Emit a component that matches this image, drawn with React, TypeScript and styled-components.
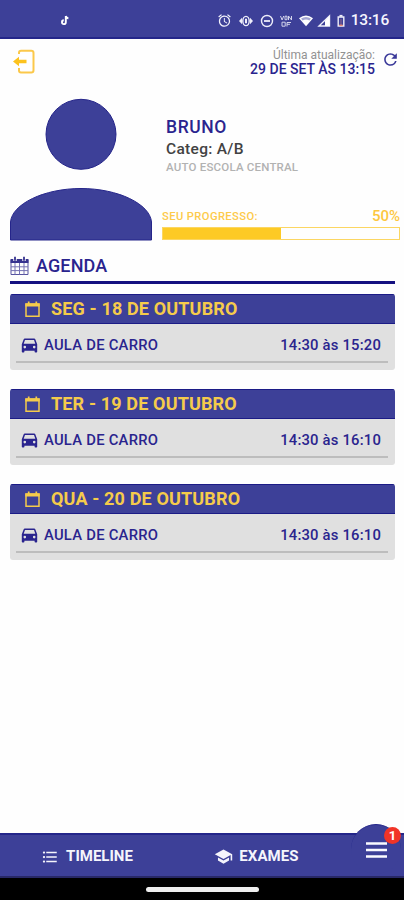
import React from "react";
import styled, { createGlobalStyle } from "styled-components";
import {
  MdAlarm,
  MdFormatListBulleted,
  MdRefresh,
  MdSchool,
} from "react-icons/md";

const colors = {
  primary: "#3d4098",
  dark: "#141080",
  text: "#2a248e",
  yellow: "#fdca25",
  gray: "#e0e0e0",
};

const GlobalStyle = createGlobalStyle`
  * { box-sizing: border-box; }
  body { margin: 0; background: #fff; font-family: Roboto, sans-serif; }
  svg { display: block; flex: none; }
`;

const Screen = styled.div`
  width: 404px;
  height: 900px;
  display: flex;
  flex-direction: column;
  overflow: hidden;
  background: #fefefe;
`;

const Label = styled.span<{ $size: number; $weight?: number; $color?: string; $spacing?: number }>`
  font-size: ${(p) => p.$size}px;
  font-weight: ${(p) => p.$weight ?? 500};
  color: ${(p) => p.$color ?? colors.text};
  letter-spacing: ${(p) => p.$spacing ?? 0}px;
  line-height: 1;
  white-space: nowrap;
`;

const StatusBar = styled.div`
  height: 39px;
  flex: none;
  display: flex;
  align-items: center;
  justify-content: space-between;
  padding: 4px 15px 0 61px;
  background: ${colors.primary};
  border-bottom: 2px solid #24268a;
  color: #f3f3fc;
`;

const StatusIcons = styled.div`
  display: flex;
  align-items: center;
`;

const StatusGlyphs = styled.div`
  display: flex;
  margin-right: 3px;
`;

const TopBar = styled.header`
  height: 50px;
  flex: none;
  display: flex;
  justify-content: space-between;
  padding: 10px 4px 0 13px;
`;

const UpdateInfo = styled.div`
  display: flex;
  gap: 6px;
`;

const UpdateText = styled.div`
  display: flex;
  flex-direction: column;
  align-items: flex-end;
  gap: 1px;
`;

const RefreshSlot = styled.div`
  padding-top: 1px;
`;

const Profile = styled.section`
  height: 153px;
  flex: none;
  display: flex;
  gap: 10px;
  padding: 0 4px 0 10px;
`;

const Avatar = styled.div`
  width: 142px;
  padding-top: 9px;
`;

const ProfileInfo = styled.div`
  width: 238px;
  display: flex;
  flex-direction: column;
`;

const Identity = styled.div`
  display: flex;
  flex-direction: column;
  align-items: flex-start;
  padding: 30px 0 0 4px;
  height: 120px;
  gap: 5px;
`;

const ProgressHead = styled.div`
  display: flex;
  justify-content: space-between;
  align-items: center;
  height: 15px;
  margin-bottom: 3px;
`;

const ProgressTrack = styled.div`
  height: 13px;
  border: 1px solid #fbd662;
`;

const ProgressFill = styled.div<{ $percent: number }>`
  width: ${(p) => p.$percent}%;
  height: 100%;
  background: ${colors.yellow};
`;

const Agenda = styled.main`
  flex: 1;
  padding: 12px 9px 0 10px;
`;

const SectionTitle = styled.h2`
  margin: 0 0 10px;
  height: 30px;
  display: flex;
  align-items: center;
  gap: 7px;
  padding-bottom: 4px;
  border-bottom: 3px solid ${colors.dark};
`;

const Cards = styled.div`
  display: flex;
  flex-direction: column;
  gap: 19px;
`;

const Card = styled.article`
  height: 76px;
  border-radius: 3px;
  overflow: hidden;
  background: ${colors.gray};
`;

const CardHeader = styled.div`
  height: 30px;
  display: flex;
  align-items: center;
  gap: 11px;
  padding-left: 15px;
  background: ${colors.primary};
  border-top: 1px solid #1b1b86;
  border-bottom: 1px solid #1b1b86;
`;

const Lesson = styled.div`
  height: 39px;
  margin: 0 7px 0 6px;
  padding: 5px 7px 0 5px;
  display: flex;
  align-items: center;
  border-bottom: 2px solid #bdbdbd;
`;

const LessonName = styled.div`
  flex: 1;
  display: flex;
  align-items: center;
  gap: 6px;
  color: ${colors.text};
`;

const NavBar = styled.nav`
  position: relative;
  height: 45px;
  flex: none;
  display: flex;
  background: ${colors.primary};
  border-top: 2px solid #24268a;
  border-bottom: 2px solid #282866;
  color: #f5f5fc;
`;

const NavItem = styled.div<{ $width: number; $gap: number }>`
  width: ${(p) => p.$width}px;
  display: flex;
  align-items: center;
  justify-content: center;
  gap: ${(p) => p.$gap}px;
  padding-top: 2px;
`;

const MenuButton = styled.div`
  position: absolute;
  right: 3px;
  top: -11px;
  width: 50px;
  height: 50px;
  border-radius: 50%;
  background: ${colors.primary};
  border-top: 1px solid #24268a;
  display: flex;
  justify-content: center;
  padding-top: 17px;
`;

const Badge = styled.div`
  position: absolute;
  top: 2px;
  right: 0;
  width: 17px;
  height: 17px;
  border-radius: 50%;
  background: #f13427;
  display: flex;
  align-items: center;
  justify-content: center;
`;

const SystemBar = styled.div`
  height: 22px;
  flex: none;
  background: #000;
  display: flex;
  justify-content: center;
  padding-top: 9px;
`;

const HomePill = styled.div`
  width: 113px;
  height: 5px;
  border-radius: 3px;
  background: #efefef;
`;

const NoteIcon = () => (
  <svg width="9" height="11" viewBox="0 0 9 11" fill="none">
    <path d="M4.8 1v6.2a1.9 1.9 0 1 1-2-1.9M4.8 1c.2 1.5 1.2 2.2 2.6 2.3" stroke="#fff" strokeWidth="1.9" />
  </svg>
);

const StatusDrawings = () => (
  <svg width="116" height="16" viewBox="0 0 116 16" fill="none" stroke="#eeeefa" strokeWidth="1.4">
    <ellipse cx="14" cy="8" rx="3.2" ry="4.6" />
    <path d="M14 5.7v4.6" strokeWidth="2" />
    <path d="M10 4.8 7 8 10 11.2zM18 4.8 21 8 18 11.2z" fill="#eeeefa" stroke="none" />
    <circle cx="35" cy="8" r="5.5" />
    <path d="M32 8h6" strokeWidth="1.8" />
    <g strokeWidth="1" opacity=".85">
      <path d="M48.5 3l1.6 4 1.6-4M53 3.2h2v3.5h-2zM56.5 7V3l3 4V3" />
      <path d="M50 9.2h3.2v4H50zM55 13.5v-4h4M55 11.3h3" />
    </g>
    <path d="M67 5.2Q74-.2 81 5.2L74 13.2z" fill="#fff" stroke="none" />
    <path d="M69 5.6q5-3 10 0l-1.6 1.8q-3.4-2-6.8 0z" fill="#5a5cae" stroke="none" opacity=".55" />
    <path d="M87 13 97.5 2.8V13z" />
    <path d="M93 7.5 97.5 3v10H93z" fill="#fff" stroke="none" />
    <path d="M106.2 4h5.6v9h-5.6z" />
    <path d="M107.5 2.8h3" strokeWidth="1.8" />
    <path d="M109 6v6" stroke="#ee8d78" strokeWidth=".8" opacity=".6" />
    <path d="M107.3 12.3h3.4" stroke="#ee8d78" />
  </svg>
);

const ExitIcon = () => (
  <svg width="23" height="26" viewBox="0 0 23 26" fill="none">
    <path d="M6 5V3.7Q6 1.7 8 1.7h10.3Q20.5 1.7 20.5 3.9v17.4q0 2.2-2.2 2.2H8q-2 0-2-2V19" stroke="#fbc84a" strokeWidth="2" />
    <path d="M0 12.5 6 7.8v3h7.5v3.5H6v3z" fill="#fcc21d" />
  </svg>
);

const PersonIcon = () => (
  <svg width="142" height="143" viewBox="0 0 142 143">
    <circle cx="71" cy="36.3" r="35" fill={colors.primary} stroke="#25258a" strokeWidth="1" />
    <path d="M.5 142V124C2 106 34 90.5 71 90.5S140 106 141.5 124v18z" fill={colors.primary} stroke="#25258a" />
  </svg>
);

const CarIcon = () => (
  <svg width="17" height="15" viewBox="0 0 17 15">
    <path
      fillRule="evenodd"
      fill={colors.text}
      d="M3.8.5h9.4q.8 0 1.1.8l1.9 5v7.4q0 .8-.8.8h-1q-.8 0-.8-.8v-1H3.4v1q0 .8-.8.8h-1q-.8 0-.8-.8V6.3l1.9-5q.3-.8 1.1-.8zM4 2 2.7 5.7h11.6L13 2zM3.8 7.8a1.3 1.3 0 1 0 0 2.6 1.3 1.3 0 0 0 0-2.6zM13.2 7.8a1.3 1.3 0 1 0 0 2.6 1.3 1.3 0 0 0 0-2.6z"
    />
  </svg>
);

const GridCalendarIcon = () => (
  <svg width="19" height="20" viewBox="0 0 19 20" fill="none">
    <path d="M1 4h17v14.5H1z" stroke="#56539f" strokeWidth="1" />
    <path d="M.5 3h18v4H.5z" fill="#37338f" />
    <path d="M1 10.8h17M1 14.6h17M5 7v11.5M9.5 7v11.5M14 7v11.5" stroke="#7673b3" strokeWidth="1" />
    <path d="M5 1v4M14 1v4" stroke="#fff" strokeWidth="3.4" />
    <path d="M5 .7v4M14 .7v4" stroke="#37338f" strokeWidth="1.8" />
  </svg>
);

const DayIcon = () => (
  <svg width="15" height="17" viewBox="0 0 15 17" fill="none">
    <path d="M1 3h13v12.3H1z" stroke="#f5cb4b" strokeWidth="1.5" />
    <path d="M.3 2.4h14.4V5.5H.3z" fill="#f5cb4b" />
    <path d="M3.7.4v3M11.3.4v3" stroke="#f5cb4b" strokeWidth="1.7" />
  </svg>
);

const MenuIcon = () => (
  <svg width="21" height="16" viewBox="0 0 21 16">
    <path d="M0 1.5h21M0 8h21M0 14.5h21" stroke="#fafaff" strokeWidth="2.4" />
  </svg>
);

const lessons = [
  { day: "SEG - 18 DE OUTUBRO", name: "AULA DE CARRO", time: "14:30 às 15:20" },
  { day: "TER - 19 DE OUTUBRO", name: "AULA DE CARRO", time: "14:30 às 16:10" },
  { day: "QUA - 20 DE OUTUBRO", name: "AULA DE CARRO", time: "14:30 às 16:10" },
];

export default function App() {
  return (
    <>
      <GlobalStyle />
      <Screen>
        <StatusBar>
          <NoteIcon />
          <StatusIcons>
            <StatusGlyphs>
              <MdAlarm size={15} />
              <StatusDrawings />
            </StatusGlyphs>
            <Label $size={15.5} $color="#f6f6ff" $spacing={-0.2}>13:16</Label>
          </StatusIcons>
        </StatusBar>
        <TopBar>
          <ExitIcon />
          <UpdateInfo>
            <UpdateText>
              <Label $size={12} $weight={400} $color="#929292">Última atualização:</Label>
              <Label $size={14}>29 DE SET ÀS 13:15</Label>
            </UpdateText>
            <RefreshSlot>
              <MdRefresh size={19} color="#3a3999" />
            </RefreshSlot>
          </UpdateInfo>
        </TopBar>
        <Profile>
          <Avatar>
            <PersonIcon />
          </Avatar>
          <ProfileInfo>
            <Identity>
              <Label $size={17.5} $spacing={0.6}>BRUNO</Label>
              <Label $size={15.5} $color="#424242" $spacing={0.3}>Categ: A/B</Label>
              <Label $size={11.5} $color="#b2b2b2" $spacing={0.2}>AUTO ESCOLA CENTRAL</Label>
            </Identity>
            <ProgressHead>
              <Label $size={11.2} $color="#fdca4a" $spacing={0.4}>SEU PROGRESSO:</Label>
              <Label $size={15} $color="#fdc73f">50%</Label>
            </ProgressHead>
            <ProgressTrack>
              <ProgressFill $percent={50} />
            </ProgressTrack>
          </ProfileInfo>
        </Profile>
        <Agenda>
          <SectionTitle>
            <GridCalendarIcon />
            <Label $size={18} $spacing={0.15}>AGENDA</Label>
          </SectionTitle>
          <Cards>
            {lessons.map((lesson) => (
              <Card key={lesson.day}>
                <CardHeader>
                  <DayIcon />
                  <Label $size={18} $weight={700} $color="#f5cb4b" $spacing={0.15}>{lesson.day}</Label>
                </CardHeader>
                <Lesson>
                  <LessonName>
                    <CarIcon />
                    <Label $size={14.8} $spacing={0.25}>{lesson.name}</Label>
                  </LessonName>
                  <Label $size={14.8} $spacing={0.2}>{lesson.time}</Label>
                </Lesson>
              </Card>
            ))}
          </Cards>
        </Agenda>
        <NavBar>
          <NavItem $width={174} $gap={7}>
            <MdFormatListBulleted size={18} />
            <Label $size={15} $weight={700} $color="#f5f5fc">TIMELINE</Label>
          </NavItem>
          <NavItem $width={165} $gap={6}>
            <MdSchool size={19} />
            <Label $size={15} $weight={700} $color="#f5f5fc" $spacing={0.1}>EXAMES</Label>
          </NavItem>
          <MenuButton>
            <MenuIcon />
            <Badge>
              <Label $size={13} $weight={700} $color="#fff">1</Label>
            </Badge>
          </MenuButton>
        </NavBar>
        <SystemBar>
          <HomePill />
        </SystemBar>
      </Screen>
    </>
  );
}
